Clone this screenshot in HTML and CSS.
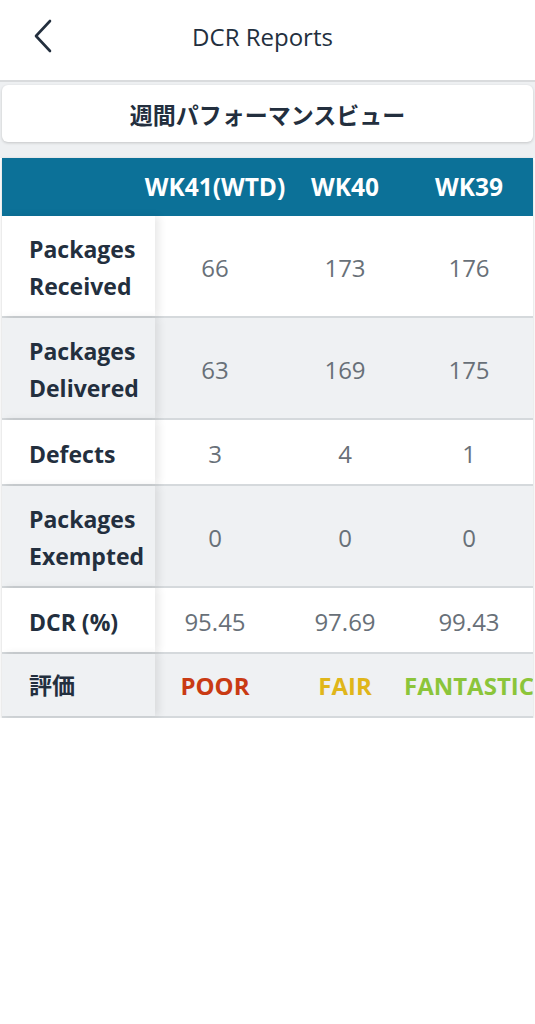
FILE: index.html
```html
<!DOCTYPE html>
<html lang="ja">
<head>
    <meta charset="UTF-8">
    <meta name="viewport" content="width=device-width, initial-scale=1.0">
    <title>DCR Reports</title>
    <link rel="stylesheet" href="styles.css">
</head>
<body>
    <!-- Kopfzeile -->
    <header class="top-bar">
        <button class="back-btn" aria-label="Back">
            <svg width="20" height="34" viewBox="0 0 20 34">
                <path d="M17 2 L3 17 L17 32" fill="none" stroke="#232f3e" stroke-width="2.6" stroke-linecap="round" stroke-linejoin="round"/>
            </svg>
        </button>
        <h1 class="title">DCR Reports</h1>
        <span class="spacer"></span>
    </header>

    <!-- Umschalter -->
    <div class="view-area">
        <div class="view-card">週間パフォーマンスビュー</div>
    </div>

    <!-- Tabelle -->
    <div class="report-table">
        <div class="row head">
            <div class="cell label"></div>
            <div class="cell">WK41(WTD)</div>
            <div class="cell">WK40</div>
            <div class="cell">WK39</div>
        </div>
        <div class="row tall">
            <div class="cell label">Packages<br>Received</div>
            <div class="cell">66</div>
            <div class="cell">173</div>
            <div class="cell">176</div>
        </div>
        <div class="row tall alt">
            <div class="cell label">Packages<br>Delivered</div>
            <div class="cell">63</div>
            <div class="cell">169</div>
            <div class="cell">175</div>
        </div>
        <div class="row">
            <div class="cell label">Defects</div>
            <div class="cell">3</div>
            <div class="cell">4</div>
            <div class="cell">1</div>
        </div>
        <div class="row tall alt">
            <div class="cell label">Packages<br>Exempted</div>
            <div class="cell">0</div>
            <div class="cell">0</div>
            <div class="cell">0</div>
        </div>
        <div class="row">
            <div class="cell label">DCR (%)</div>
            <div class="cell">95.45</div>
            <div class="cell">97.69</div>
            <div class="cell">99.43</div>
        </div>
        <div class="row alt last">
            <div class="cell label">評価</div>
            <div class="cell rating poor">POOR</div>
            <div class="cell rating fair">FAIR</div>
            <div class="cell rating fantastic">FANTASTIC</div>
        </div>
    </div>
</body>
</html>
```

FILE: styles.css
```css
* {
    margin: 0;
    padding: 0;
    box-sizing: border-box;
}

body {
    font-family: 'Open Sans', 'Noto Sans CJK JP', sans-serif;
    background-color: #ffffff;
    color: #232f3e;
    width: 535px;
}

/* Kopfzeile */
.top-bar {
    height: 82px;
    display: flex;
    align-items: center;
    justify-content: space-between;
    padding: 0 0 2px 0;
    border-bottom: 2px solid #d9dbdd;
    background-color: #ffffff;
}

.back-btn {
    width: 70px;
    height: 80px;
    border: none;
    background: none;
    display: flex;
    align-items: center;
    justify-content: center;
    padding-left: 16px;
    padding-bottom: 6px;
}

.title {
    font-size: 24px;
    font-weight: normal;
    color: #232f3e;
    padding-bottom: 6px;
    margin-left: -10px;
}

.spacer {
    width: 70px;
}

/* Umschalter */
.view-area {
    background-color: #eef0f2;
    padding: 3px 2px 16px 2px;
}

.view-card {
    background-color: #ffffff;
    border-radius: 6px;
    height: 57px;
    display: flex;
    align-items: center;
    justify-content: center;
    font-family: 'Noto Sans CJK JP', sans-serif;
    font-size: 23px;
    font-weight: bold;
    color: #232f3e;
    box-shadow: 0 1px 3px rgba(0, 0, 0, 0.18);
}

/* Tabelle */
.report-table {
    margin: 0 2px;
    overflow: hidden;
    box-shadow: 0 1px 3px rgba(0, 0, 0, 0.2);
}

.row {
    display: grid;
    grid-template-columns: 153px 120px 140px 108px;
    height: 66px;
    border-bottom: 2px solid #d5d9dc;
    background-color: #ffffff;
}

.row.tall {
    height: 102px;
}

.row.alt {
    background-color: #eff1f3;
}

.row.last {
    height: 64px;
}

.row.head {
    height: 58px;
    background-color: #0c7198;
    border-bottom: none;
}

.cell {
    display: flex;
    align-items: center;
    justify-content: center;
    white-space: nowrap;
    font-size: 24px;
    color: #687078;
    padding-top: 3px;
}

.head .cell {
    color: #ffffff;
    font-weight: bold;
    font-size: 24.5px;
    padding-top: 0;
    padding-bottom: 2px;
}

.cell.label {
    justify-content: flex-start;
    padding-left: 27px;
    padding-top: 4px;
    font-size: 23px;
    font-weight: bold;
    line-height: 37px;
    color: #232f3e;
    background-color: inherit;
    position: relative;
    z-index: 1;
    box-shadow: 4px 0 8px rgba(0, 0, 0, 0.09);
}

.head .cell.label {
    box-shadow: none;
    background: none;
}

.rating {
    font-weight: bold;
    font-size: 24px;
    padding-top: 1px;
}

.last .cell.label {
    padding-top: 1px;
}

.poor {
    color: #c93a13;
}

.fair {
    color: #e0b61a;
}

.fantastic {
    color: #8bc53a;
}
```
